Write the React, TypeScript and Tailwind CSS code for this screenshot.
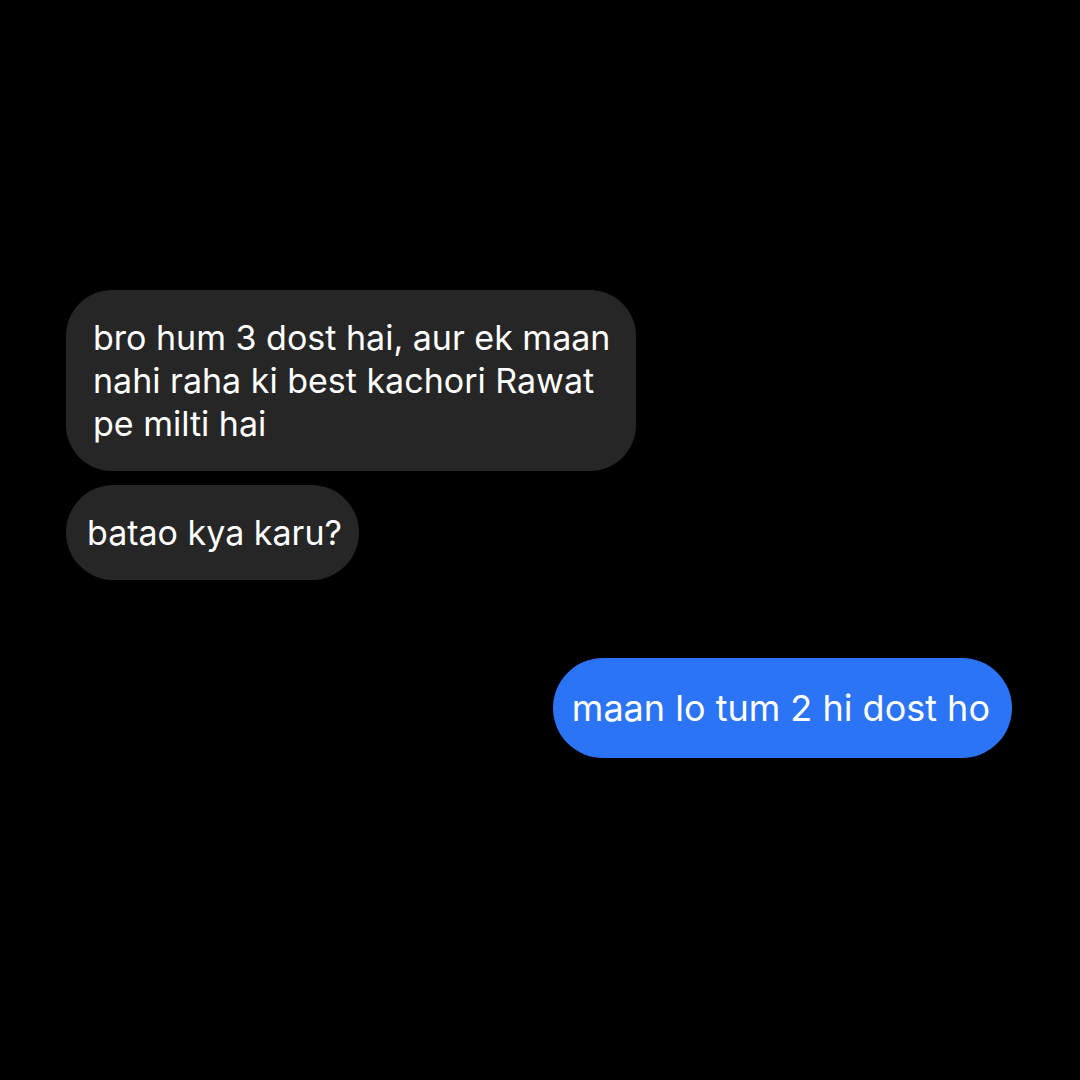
const App = () => {
  return (
    <div
      className="w-[1080px] h-[1080px] bg-black flex flex-col pt-[290px] px-[66px]"
      style={{ fontFamily: "Inter, 'Noto Sans', sans-serif" }}
    >
      <div className="w-[570px] rounded-[46px] bg-[#262626] pl-[27px] pr-[20px] py-[26px] text-white text-[34px] leading-[43px]">
        bro hum 3 dost hai, aur ek maan nahi raha ki best kachori Rawat pe milti hai
      </div>
      <div className="mt-[14px] self-start rounded-[48px] bg-[#262626] pl-[21px] pr-[17px] py-[26px] text-white text-[34px] leading-[43px]">
        batao kya karu?
      </div>
      <div className="mt-[78px] self-end mr-[2px] rounded-[50px] bg-[#2c74f6] pl-[19px] pr-[22px] py-[28px] text-white text-[36px] leading-[44px]">
        maan lo tum 2 hi dost ho
      </div>
    </div>
  );
};

export default App;
